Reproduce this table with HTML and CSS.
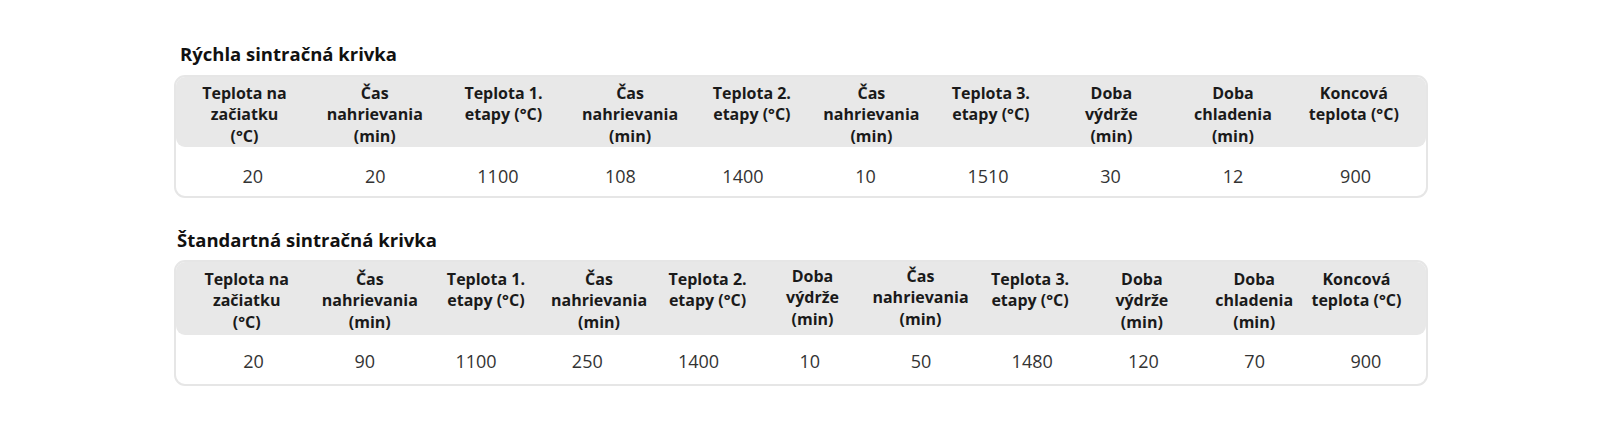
FILE: index.html
```html
<!DOCTYPE html>
<html lang="sk">
<head>
<meta charset="utf-8">
<title>Sintračné krivky</title>
<link rel="stylesheet" href="styles.css">
</head>
<body>
<main class="page">
  <section class="curve curve-fast">
    <h2 class="curve-title">Rýchla sintračná krivka</h2>
    <div class="sheet">
      <div class="head head-10">
        <div class="hcell">Teplota na<br>začiatku<br>(°C)</div>
        <div class="hcell">Čas<br>nahrievania<br>(min)</div>
        <div class="hcell">Teplota 1.<br>etapy (°C)</div>
        <div class="hcell">Čas<br>nahrievania<br>(min)</div>
        <div class="hcell">Teplota 2.<br>etapy (°C)</div>
        <div class="hcell">Čas<br>nahrievania<br>(min)</div>
        <div class="hcell">Teplota 3.<br>etapy (°C)</div>
        <div class="hcell">Doba<br>výdrže<br>(min)</div>
        <div class="hcell">Doba<br>chladenia<br>(min)</div>
        <div class="hcell">Koncová<br>teplota (°C)</div>
      </div>
      <div class="body body-10">
        <div class="vcell">20</div>
        <div class="vcell">20</div>
        <div class="vcell">1100</div>
        <div class="vcell">108</div>
        <div class="vcell">1400</div>
        <div class="vcell">10</div>
        <div class="vcell">1510</div>
        <div class="vcell">30</div>
        <div class="vcell">12</div>
        <div class="vcell">900</div>
      </div>
    </div>
  </section>

  <section class="curve curve-std">
    <h2 class="curve-title">Štandartná sintračná krivka</h2>
    <div class="sheet">
      <div class="head head-11">
        <div class="hcell">Teplota na<br>začiatku<br>(°C)</div>
        <div class="hcell">Čas<br>nahrievania<br>(min)</div>
        <div class="hcell">Teplota 1.<br>etapy (°C)</div>
        <div class="hcell">Čas<br>nahrievania<br>(min)</div>
        <div class="hcell">Teplota 2.<br>etapy (°C)</div>
        <div class="hcell hcell-up">Doba<br>výdrže<br>(min)</div>
        <div class="hcell hcell-up">Čas<br>nahrievania<br>(min)</div>
        <div class="hcell">Teplota 3.<br>etapy (°C)</div>
        <div class="hcell">Doba<br>výdrže<br>(min)</div>
        <div class="hcell">Doba<br>chladenia<br>(min)</div>
        <div class="hcell">Koncová<br>teplota (°C)</div>
      </div>
      <div class="body body-11">
        <div class="vcell">20</div>
        <div class="vcell">90</div>
        <div class="vcell">1100</div>
        <div class="vcell">250</div>
        <div class="vcell">1400</div>
        <div class="vcell">10</div>
        <div class="vcell">50</div>
        <div class="vcell">1480</div>
        <div class="vcell">120</div>
        <div class="vcell">70</div>
        <div class="vcell">900</div>
      </div>
    </div>
  </section>
</main>
</body>
</html>
```

FILE: styles.css
```css
* { box-sizing: border-box; }

html, body {
  margin: 0;
  padding: 0;
  background: #ffffff;
}

body {
  font-family: "Open Sans", "Noto Sans", "Liberation Sans", sans-serif;
  color: #1a1a1a;
}

.page {
  width: 1254px;
  margin-left: 174px;
  padding-top: 41px;
}

.curve-title {
  margin: 0;
  font-size: 18.5px;
  line-height: 26px;
  font-weight: 700;
  color: #111111;
}

.curve-fast .curve-title { padding-left: 6px; }
.curve-std { margin-top: 29px; }
.curve-std .curve-title { padding-left: 3px; }

.sheet {
  margin-top: 8px;
  border: 2px solid #e6e6e6;
  border-radius: 11px;
  overflow: hidden;
}

.curve-std .sheet { margin-top: 7px; }

.head {
  display: grid;
  height: 70px;
  background: #e8e8e8;
  border-radius: 0 0 9px 9px;
  padding-top: 5.6px;
}

.head-10 {
  padding-left: 2.5px;
  grid-template-columns: 132px 128.5px 128.9px 124.4px 119.2px 119.8px 119.2px 121.8px 121.3px 120.6px;
}

.head-11 {
  height: 72.7px;
  padding-left: 7.2px;
  padding-top: 6.6px;
  grid-template-columns: 127px 119.2px 113.1px 113.1px 104px 105.9px 110.1px 109px 114.6px 110.1px 94.4px;
}

.hcell {
  text-align: center;
  font-size: 16px;
  line-height: 21.5px;
  font-weight: 700;
  color: #1a1a1a;
  white-space: nowrap;
}

.hcell-up { margin-top: -3px; }

.body {
  display: grid;
  height: 49px;
  padding-top: 16.6px;
}

.body-10 {
  padding-left: 15.6px;
  padding-right: 9.2px;
  grid-template-columns: repeat(10, 1fr);
}

.body-11 {
  height: 49px;
  padding-left: 22px;
  padding-right: 4.5px;
  padding-top: 14.6px;
  grid-template-columns: repeat(11, 1fr);
}

.vcell {
  text-align: center;
  font-size: 18px;
  line-height: 24px;
  font-weight: 400;
  color: #333333;
}
```
